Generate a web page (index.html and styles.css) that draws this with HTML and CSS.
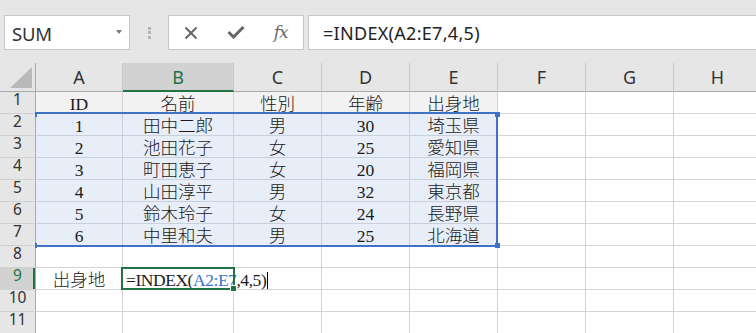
FILE: index.html
```html
<!DOCTYPE html>
<html lang="ja">
<head>
<meta charset="utf-8">
<title>Excel INDEX</title>
<link rel="stylesheet" href="styles.css">
</head>
<body>
<div class="toolbar">
  <div class="namebox"><span class="nb-text">SUM</span><span class="dd"></span></div>
  <div class="grip"><i></i><i></i><i></i></div>
  <div class="btns">
    <span class="slot"><svg width="14" height="14" viewBox="0 0 14 14"><path d="M1.5 1.5 L12.5 12.5 M12.5 1.5 L1.5 12.5" stroke="#666" stroke-width="2" fill="none"/></svg></span>
    <span class="slot"><svg width="18" height="13" viewBox="0 0 18 13"><path d="M1.5 6 L6.5 11 L16.5 1" stroke="#666" stroke-width="3" fill="none"/></svg></span>
    <span class="slot fx">fx</span>
  </div>
  <div class="fbar">=INDEX(A2:E7,4,5)</div>
</div>
<div class="sheet">
  <div class="co"><svg width="35" height="28" viewBox="0 0 35 28"><polygon points="10,25 32,25 32,4" fill="#b9b9b9"/></svg></div>
  <div class="ch">A</div><div class="ch on">B</div><div class="ch">C</div><div class="ch">D</div><div class="ch">E</div><div class="ch">F</div><div class="ch">G</div><div class="ch">H</div>

  <div class="rh">1</div>
  <div class="c h1">ID</div><div class="c h1">名前</div><div class="c h1">性別</div><div class="c h1">年齢</div><div class="c h1">出身地</div><div class="c"></div><div class="c"></div><div class="c"></div>

  <div class="rh">2</div>
  <div class="c s">1</div><div class="c s">田中二郎</div><div class="c s">男</div><div class="c s">30</div><div class="c s">埼玉県</div><div class="c"></div><div class="c"></div><div class="c"></div>

  <div class="rh">3</div>
  <div class="c s">2</div><div class="c s">池田花子</div><div class="c s">女</div><div class="c s">25</div><div class="c s">愛知県</div><div class="c"></div><div class="c"></div><div class="c"></div>

  <div class="rh">4</div>
  <div class="c s">3</div><div class="c s">町田恵子</div><div class="c s">女</div><div class="c s">20</div><div class="c s">福岡県</div><div class="c"></div><div class="c"></div><div class="c"></div>

  <div class="rh">5</div>
  <div class="c s">4</div><div class="c s">山田淳平</div><div class="c s">男</div><div class="c s">32</div><div class="c s">東京都</div><div class="c"></div><div class="c"></div><div class="c"></div>

  <div class="rh">6</div>
  <div class="c s">5</div><div class="c s">鈴木玲子</div><div class="c s">女</div><div class="c s">24</div><div class="c s">長野県</div><div class="c"></div><div class="c"></div><div class="c"></div>

  <div class="rh">7</div>
  <div class="c s">6</div><div class="c s">中里和夫</div><div class="c s">男</div><div class="c s">25</div><div class="c s">北海道</div><div class="c"></div><div class="c"></div><div class="c"></div>

  <div class="rh">8</div>
  <div class="c"></div><div class="c"></div><div class="c"></div><div class="c"></div><div class="c"></div><div class="c"></div><div class="c"></div><div class="c"></div>

  <div class="rh on">9</div>
  <div class="c">出身地</div><div class="c f">=INDEX(<span class="ref">A2:E7</span>,4,5)<span class="caret"></span></div><div class="c"></div><div class="c"></div><div class="c"></div><div class="c"></div><div class="c"></div><div class="c"></div>

  <div class="rh">10</div>
  <div class="c"></div><div class="c"></div><div class="c"></div><div class="c"></div><div class="c"></div><div class="c"></div><div class="c"></div><div class="c"></div>

  <div class="rh">11</div>
  <div class="c"></div><div class="c"></div><div class="c"></div><div class="c"></div><div class="c"></div><div class="c"></div><div class="c"></div><div class="c"></div>

  <div class="sel"></div>
  <div class="hd hd-tr"></div>
  <div class="hd hd-br"></div>
  <div class="hd hd-tl"></div>
  <div class="hd hd-bl"></div>
  <div class="active"></div>
  <div class="fill"></div>
</div>
</body>
</html>
```

FILE: styles.css
```css
html, body {
  margin: 0;
  padding: 0;
}
body {
  width: 756px;
  height: 333px;
  overflow: hidden;
  background: #ffffff;
  font-family: "Noto Sans", sans-serif;
}

/* ---------- toolbar ---------- */
.toolbar {
  height: 63px;
  box-sizing: border-box;
  padding: 15px 0 0 4px;
  background: #e6e6e6;
  display: flex;
  align-items: flex-start;
}
.namebox {
  width: 126px;
  height: 35px;
  box-sizing: border-box;
  border: 1px solid #c6c6c6;
  background: #fff;
  display: flex;
  align-items: center;
  justify-content: space-between;
  padding: 2px 7px 0 7px;
}
.nb-text {
  font-size: 18.5px;
  color: #333;
  letter-spacing: -0.2px;
}
.dd {
  width: 0;
  height: 0;
  border-left: 3.5px solid transparent;
  border-right: 3.5px solid transparent;
  border-top: 4px solid #7a7a7a;
  margin-top: -3px;
}
.grip {
  width: 38px;
  height: 35px;
  display: flex;
  flex-direction: column;
  align-items: center;
  justify-content: center;
  gap: 1.5px;
}
.grip i {
  display: block;
  width: 3px;
  height: 3px;
  background: #b4b4b4;
}
.btns {
  width: 136px;
  height: 35px;
  box-sizing: border-box;
  border: 1px solid #c6c6c6;
  background: #fff;
  display: flex;
  align-items: center;
}
.slot {
  width: 45px;
  display: flex;
  align-items: center;
  justify-content: center;
}
.fx {
  font-family: "DejaVu Serif", serif;
  font-style: italic;
  font-size: 17px;
  letter-spacing: -1px;
  color: #6a6a6a;
  margin-top: -2px;
}
.fbar {
  flex: 1;
  margin-left: 4px;
  height: 35px;
  box-sizing: border-box;
  border: 1px solid #c6c6c6;
  border-right: none;
  background: #fff;
  padding-left: 14px;
  display: flex;
  align-items: center;
  font-size: 18px;
  letter-spacing: 0.3px;
  color: #222;
}

/* ---------- sheet ---------- */
.sheet {
  position: relative;
  width: 762px;
  display: grid;
  grid-template-columns: 36px 87px 111px 88px 88px 88px 88px 88px 88px;
  grid-template-rows: 29px repeat(11, 22px);
}
.co {
  background: #e6e6e6;
  border-right: 1px solid #ababab;
  border-bottom: 1px solid #ababab;
  box-sizing: border-box;
}
.co svg { display: block; }
.ch {
  background: #e6e6e6;
  box-sizing: border-box;
  border-right: 1px solid #c8c8c8;
  border-bottom: 1px solid #ababab;
  display: flex;
  align-items: center;
  justify-content: center;
  font-size: 18px;
  color: #333;
}
.ch.on {
  background: #d2d2d2;
  border-bottom: 2px solid #217346;
  color: #217346;
}
.rh {
  background: #e6e6e6;
  box-sizing: border-box;
  border-right: 1px solid #ababab;
  border-bottom: 1px solid #d0d0d0;
  text-align: center;
  font-size: 15.5px;
  line-height: 15px;
  color: #333;
}
.rh.on {
  background: #d2d2d2;
  color: #217346;
  box-shadow: inset -2px 0 0 #217346;
}
.c {
  box-sizing: border-box;
  border-right: 1px solid #d4d4d4;
  border-bottom: 1px solid #d4d4d4;
  text-align: center;
  white-space: nowrap;
  font-family: "Liberation Serif", "Noto Sans CJK JP", serif;
  font-size: 17.5px;
  font-weight: 300;
  line-height: 24px;
  color: #1a1a1a;
}
.c.h1 {
  background: #f2f2f2;
}
.c.s {
  background: #e8eef8;
  border-right-color: #c9d0dc;
  border-bottom-color: #c9d0dc;
}
.c.f {
  text-align: left;
  padding-left: 3px;
  letter-spacing: -0.45px;
  overflow: visible;
  position: relative;
  z-index: 1;
}
.ref {
  color: #3a72cc;
}
.caret {
  display: inline-block;
  width: 1px;
  height: 17px;
  background: #000;
  vertical-align: -3px;
  margin-left: 1px;
}

/* ---------- overlays ---------- */
.sel {
  position: absolute;
  left: 35px;
  top: 49px;
  width: 463px;
  height: 135px;
  box-sizing: border-box;
  border-top: 2px solid #3d72c7;
  border-right: 2px solid #3d72c7;
  border-bottom: 2px solid #3d72c7;
  z-index: 2;
}
.hd {
  position: absolute;
  background: #3d72c7;
  z-index: 3;
}
.hd-tr { left: 495px; top: 49px; width: 5px; height: 5px; }
.hd-br { left: 495px; top: 180px; width: 5px; height: 5px; }
.hd-tl { left: 35px; top: 49px; width: 2px; height: 5px; }
.hd-bl { left: 35px; top: 180px; width: 2px; height: 5px; }
.active {
  position: absolute;
  left: 121px;
  top: 204px;
  width: 114px;
  height: 23px;
  box-sizing: border-box;
  border: 2px solid #217346;
  z-index: 2;
}
.fill {
  position: absolute;
  left: 231px;
  top: 223px;
  width: 5px;
  height: 5px;
  background: #217346;
  outline: 1px solid #fff;
  z-index: 3;
}
```
